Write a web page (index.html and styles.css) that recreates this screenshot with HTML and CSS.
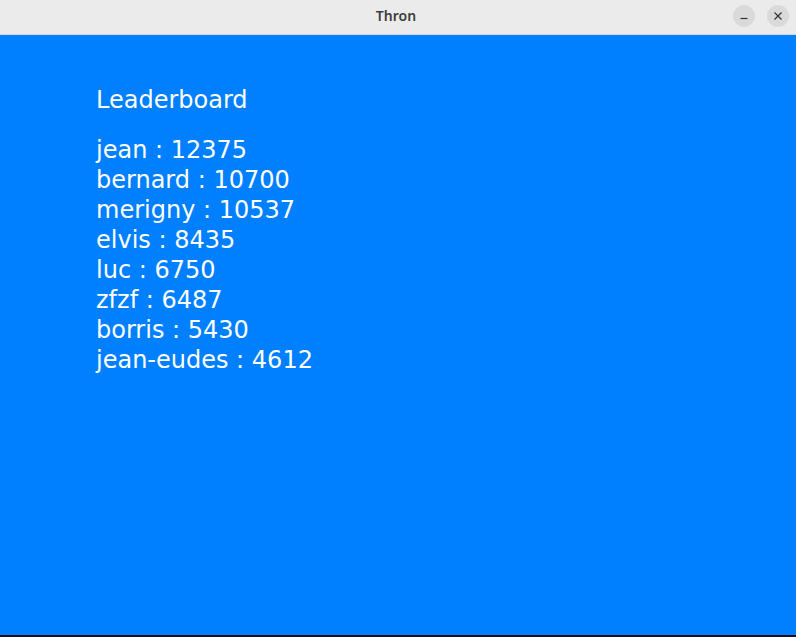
FILE: index.html
```
<!DOCTYPE html>
<html>
<head>
<meta charset="utf-8">
<link rel="stylesheet" href="styles.css">
</head>
<body>
<div class="window">
  <div class="titlebar">
    <div class="title">Thron</div>
    <div class="controls">
      <div class="btn"><svg width="10" height="10" viewBox="0 0 10 10"><path d="M1.5 7.5h7" stroke="#333" stroke-width="1.2"/></svg></div>
      <div class="btn"><svg width="10" height="10" viewBox="0 0 10 10"><path d="M1.5 1.5l7 7M8.5 1.5l-7 7" stroke="#333" stroke-width="1.2"/></svg></div>
    </div>
  </div>
  <div class="content">
    <div class="heading">Leaderboard</div>
    <ul class="list">
      <li>jean : 12375</li>
      <li>bernard : 10700</li>
      <li>merigny : 10537</li>
      <li>elvis : 8435</li>
      <li>luc : 6750</li>
      <li>zfzf : 6487</li>
      <li>borris : 5430</li>
      <li>jean-eudes : 4612</li>
    </ul>
  </div>
</div>
</body>
</html>
```
FILE: styles.css
```
html, body { margin: 0; padding: 0; }
body { width: 796px; height: 637px; overflow: hidden; background: #1a0f1a; }
.window { display: flex; flex-direction: column; height: 635px; }
.titlebar {
  height: 35px; background: #ebebeb; border-bottom: 1px solid #d6d6d6;
  display: flex; align-items: center; justify-content: center; position: relative;
  box-sizing: border-box; padding-bottom: 3px;
}
.title { font-family: "Noto Sans", sans-serif; font-weight: 600; font-size: 14px; color: #3d3d3d; margin-left: -4px; }
.controls { position: absolute; right: 7px; top: 5px; display: flex; gap: 12px; }
.btn { width: 22px; height: 22px; border-radius: 50%; background: #dadada; display: flex; align-items: center; justify-content: center; }
.content { flex: 1; background: #007fff; padding: 50px 96px 0; color: #fff; font-family: "DejaVu Sans", sans-serif; }
.heading { font-size: 24px; line-height: 30px; }
.list { list-style: none; margin: 20px 0 0; padding: 0; font-size: 24px; line-height: 30px; }
```
